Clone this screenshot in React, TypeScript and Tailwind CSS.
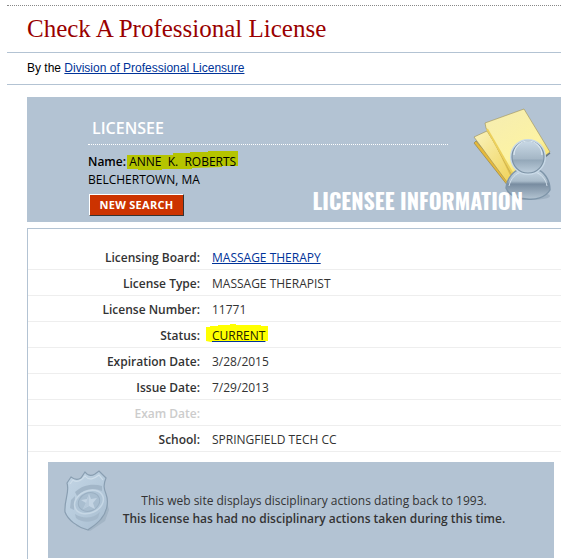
const rows = [
    { label: 'Licensing Board:', value: 'MASSAGE THERAPY', link: true },
    { label: 'License Type:', value: 'MASSAGE THERAPIST' },
    { label: 'License Number:', value: '11771' },
    { label: 'Status:', value: 'CURRENT', link: true, marked: true },
    { label: 'Expiration Date:', value: '3/28/2015' },
    { label: 'Issue Date:', value: '7/29/2013' },
    { label: 'Exam Date:', value: '', disabled: true },
    { label: 'School:', value: 'SPRINGFIELD TECH CC' },
];

function FoldersIcon() {
    return (
        <svg width="82" height="98" viewBox="0 0 82 98" aria-hidden="true">
            <defs>
                <linearGradient id="paper" x1="0.2" y1="0" x2="0.8" y2="1">
                    <stop offset="0" stopColor="#f6edb0" />
                    <stop offset="0.6" stopColor="#fcf3a4" />
                    <stop offset="1" stopColor="#f3d64c" />
                </linearGradient>
                <linearGradient id="paperBack" x1="0" y1="0" x2="1" y2="1">
                    <stop offset="0" stopColor="#faf3bd" />
                    <stop offset="1" stopColor="#efd050" />
                </linearGradient>
                <linearGradient id="head" x1="0" y1="0" x2="0" y2="1">
                    <stop offset="0" stopColor="#c9d9e6" />
                    <stop offset="0.55" stopColor="#a5b7c6" />
                    <stop offset="0.6" stopColor="#94a8b9" />
                    <stop offset="1" stopColor="#bccddb" />
                </linearGradient>
                <linearGradient id="body" x1="0" y1="0" x2="0" y2="1">
                    <stop offset="0" stopColor="#c8d8e5" />
                    <stop offset="0.4" stopColor="#a9bbca" />
                    <stop offset="0.5" stopColor="#788ca0" />
                    <stop offset="1" stopColor="#b4c5d3" />
                </linearGradient>
            </defs>
            <path d="M4 41 L6 39 L44 82 L38 84 Z" fill="#e5b93c" stroke="#8d7c3c" strokeWidth="0.6" />
            <path d="M4 35 L17 29 L50 80 L37 80 Z" fill="url(#paperBack)" stroke="#9b8c50" strokeWidth="0.6" />
            <path d="M15 22 L43 64 L47 77 L40 73 Z" fill="#dcbc4c" />
            <path d="M15 21 L54 7 L80 50 L44 76 L16 26 Z" fill="url(#paper)" stroke="#a09052" strokeWidth="0.6" />
            <path d="M17 27 L44 74" stroke="#ecd05c" strokeWidth="2" fill="none" />
            <path d="M70 59 L80 51" stroke="#65747e" strokeWidth="1.5" />
            <ellipse cx="61" cy="94" rx="19" ry="4" fill="#879bad" opacity="0.45" />
            <path d="M36 86 C37 76 44 68 51 67 L66 67 C74 69 80 78 80 88 C75 96 65 98 57 97 C49 97 39 94 36 86 Z" fill="url(#body)" stroke="#7e95a9" strokeWidth="1.4" />
            <path d="M39 84 C41 76 46 71 52 70 L65 70 C71 72 76 77 77 84" fill="none" stroke="#d4e2ed" strokeWidth="1" />
            <circle cx="58" cy="55" r="18" fill="#c8d9e7" />
            <circle cx="58" cy="55" r="16" fill="url(#head)" stroke="#7b91a4" strokeWidth="1.2" />
            <path d="M44 53 A14 14 0 0 1 72 53" fill="none" stroke="#dce8f1" strokeWidth="1.2" />
        </svg>
    );
}

function BadgeIcon() {
    return (
        <svg width="46" height="62" viewBox="0 0 46 62" aria-hidden="true">
            <defs>
                <linearGradient id="shield" x1="0" y1="0" x2="1" y2="1">
                    <stop offset="0" stopColor="#c3d5e5" />
                    <stop offset="0.5" stopColor="#b7cbdc" />
                    <stop offset="1" stopColor="#a8bdd0" />
                </linearGradient>
            </defs>
            <path d="M12 56 L26 61 L41 51 L45 40 L38 12 Z" fill="#97abbd" opacity="0.6" />
            <path d="M3 13 L7 7 C11 10 14 10 17 8 L21 2 C24 6 28 6 31 4 L35 1 L42 8 C39 15 40 19 42 24 C45 32 43 42 37 49 C33 54 28 57 24 60 C13 57 4 50 1 42 C0 30 6 22 3 13 Z" fill="url(#shield)" stroke="#899eb1" strokeWidth="1.2" />
            <path d="M6 14 L9 10 C13 13 17 11 21 6 C25 11 30 9 35 5 L39 10" fill="none" stroke="#cfdeea" strokeWidth="1.2" />
            <path d="M11 22 C18 15 29 13 38 16 L38 21 C29 17 20 19 13 26 Z" fill="#a2b6c8" />
            <path d="M11 44 C18 49 29 49 36 42 L34 48 C28 53 18 53 12 48 Z" fill="#a5b9cb" />
            <path d="M7 30 L11 26 L10 40 L6 38 Z" fill="#a5b9cb" />
            <ellipse cx="25" cy="32" rx="15" ry="11" transform="rotate(-24 25 32)" fill="#afc4d6" stroke="#c6d7e5" strokeWidth="1.5" />
            <ellipse cx="25" cy="32" rx="11" ry="9" transform="rotate(-24 25 32)" fill="#a9bed0" stroke="#9bb0c3" strokeWidth="1" />
            <path d="M25 24 L27 29 L33 28 L29 33 L31 39 L25 36 L19 39 L22 33 L17 30 L23 29 Z" fill="#c3d4e3" />
            <path d="M25 24 L25 36 L19 39 L22 33 Z" fill="#b6c9da" />
        </svg>
    );
}

export default function App() {
    return (
        <div className="bg-white pl-[7px] pt-[5px] font-['Open_Sans',sans-serif] text-[12px] text-[#333333]">
            <header>
                <div className="border-t border-dotted border-[#888888] pl-5 pt-2 pb-2">
                    <h1 className="font-['Liberation_Serif',serif] text-[25px] leading-[30px] text-[#990000]">Check A Professional License</h1>
                </div>
                <p className="border-y border-[#b3c3d3] pl-5 font-['Liberation_Sans',sans-serif] leading-[31px] text-black">
                    By the <a href="#" className="text-[#003399] underline">Division of Professional Licensure</a>
                </p>
            </header>

            <main className="ml-5 mt-3">
                <section className="relative h-[125px] bg-[#b3c3d3] pl-[61px] pt-5 text-black">
                    <div className="mr-[113px] border-b border-dotted border-white pb-1 pl-1">
                        <h2 className="text-[16px] leading-[23px] font-semibold text-white">LICENSEE</h2>
                    </div>
                    <p className="mt-2 leading-[18px]">
                        <span className="font-semibold">Name:</span>{' '}
                        <span className="relative inline-block">
                            <svg className="absolute -left-[2px] -top-[2px] h-5 w-[111px]" viewBox="0 0 111 20" preserveAspectRatio="none" aria-hidden="true">
                                <path d="M0 4 L46 4 L46 2 L63 2 L63 1 L81 1 L81 0 L111 0 L111 15 L95 15 L95 16 L65 17 L65 18 L35 18 L35 19 L11 19 L11 18 L0 18 Z" fill="#b5c400" />
                            </svg>
                            <span className="relative whitespace-pre">ANNE  K.  ROBERTS</span>
                        </span>
                    </p>
                    <p className="leading-[18px]">BELCHERTOWN, MA</p>
                    <button className="mt-[5px] ml-px h-[22px] w-[95px] border border-t-white border-l-white border-r-[#333333] border-b-[#333333] bg-[#cc3300] text-[11px] font-bold tracking-wide text-white">NEW SEARCH</button>
                    <div className="absolute right-[9px] top-[5px]">
                        <FoldersIcon />
                    </div>
                    <div className="absolute right-[38px] bottom-1 font-['Oswald','Roboto_Condensed',Roboto,sans-serif] text-[22px] leading-9 font-black whitespace-nowrap text-white">LICENSEE INFORMATION</div>
                </section>

                <section className="mt-[6px] border-t border-l border-[#b3c3d3] pt-[14px]">
                    <table className="w-full border-collapse">
                        <tbody>
                            {rows.map((row) => (
                                <tr key={row.label} className="h-[26px] border-b border-[#eeeeee]">
                                    <th scope="row" className={row.disabled ? 'w-[178px] pt-1 pr-[6px] text-right font-semibold text-[#cccccc]' : 'w-[178px] pt-1 pr-[6px] text-right font-semibold'}>
                                        {row.label}
                                    </th>
                                    <td className="pt-1 pl-[6px]">
                                        <span className="relative inline-block">
                                            {row.marked && (
                                                <svg className="absolute -left-[6px] -top-[3px] h-[18px] w-[62px]" viewBox="0 0 62 18" preserveAspectRatio="none" aria-hidden="true">
                                                    <path d="M0 3 L4 3 L4 2 L12 2 L12 1 L24 1 L24 0 L30 0 L30 1 L55 1 L55 2 L62 2 L62 17 L48 17 L48 18 L5 18 L0 17 Z" fill="#ffff00" />
                                                </svg>
                                            )}
                                            {row.link ? <a href="#" className={row.marked ? 'relative text-[#222200] underline decoration-[#003399]' : 'text-[#003399] underline'}>{row.value}</a> : row.value}
                                        </span>
                                    </td>
                                </tr>
                            ))}
                        </tbody>
                    </table>

                    <div className="mt-[10px] mr-[7px] ml-5 flex h-24 items-start bg-[#b3c3d3] pt-2 pl-4">
                        <BadgeIcon />
                        <div className="flex-1 pt-[22px] pr-9 text-center leading-[18px]">
                            <p>This web site displays disciplinary actions dating back to 1993.</p>
                            <p className="font-semibold">This license has had no disciplinary actions taken during this time.</p>
                        </div>
                    </div>
                    <div className="h-px" />
                </section>
            </main>
        </div>
    );
}
